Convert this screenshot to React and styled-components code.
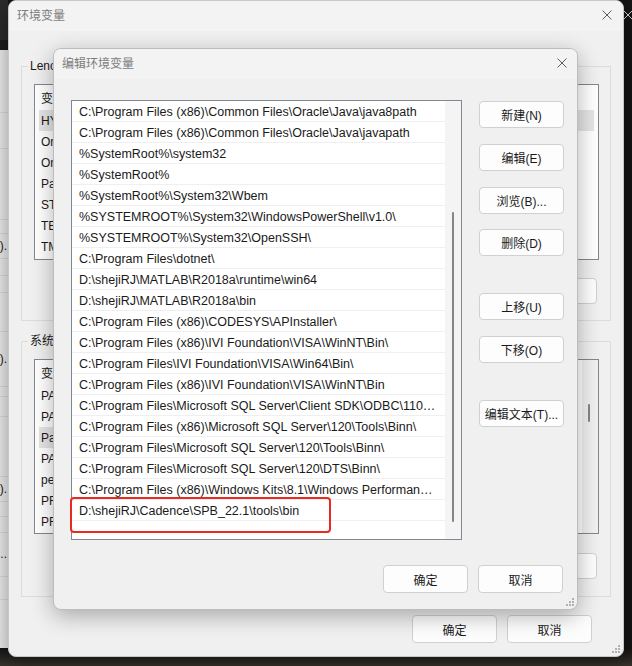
import React from "react";
import styled, { createGlobalStyle } from "styled-components";

// #region - styling -

const GlobalStyle = createGlobalStyle`
  html, body {
    margin: 0;
    padding: 0;
  }
  body {
    background: #161616;
    font-family: "Liberation Sans", "Noto Sans CJK SC", sans-serif;
    font-size: 12px;
    color: #1a1a1a;
  }
  * {
    box-sizing: border-box;
  }
`;

const Desktop = styled.div`
  position: relative;
  width: 632px;
  height: 666px;
  overflow: hidden;
  background: linear-gradient(#151515 0, #151515 648px, #3a332c 666px);
`;

/* window half hidden behind the left edge */
const BackWindow = styled.div`
  position: absolute;
  left: -192px;
  top: 0;
  width: 200px;
  height: 648px;
  background: #eeeeee;
  display: flex;
  flex-direction: column;
`;

const BackHeader = styled.div`
  height: 50px;
  flex: none;
  background: #2b2b2b;
  border-bottom: 10px solid #1b1b1b;
`;

const BackRow = styled.div`
  height: ${(p) => p.$h}px;
  flex: none;
  border-bottom: 1px solid #dcdcdc;
  text-align: right;
  padding-right: 1px;
  font-size: 12px;
  line-height: ${(p) => p.$h - 1}px;
  white-space: nowrap;
`;

const Window = styled.div`
  position: absolute;
  left: ${(p) => p.$x}px;
  top: ${(p) => p.$y}px;
  width: ${(p) => p.$w}px;
  height: ${(p) => p.$h}px;
  background: #f0f0f0;
  border: 1px solid ${(p) => (p.$front ? "#bdbdbd" : "#c8c8c8")};
  border-radius: 8px;
  box-shadow: 0 6px 22px rgba(0, 0, 0, ${(p) => (p.$front ? 0.3 : 0.4)});
  display: flex;
  flex-direction: column;
  overflow: hidden;
`;

const TitleBar = styled.div`
  height: 30px;
  flex: none;
  display: flex;
  align-items: center;
  justify-content: space-between;
  padding: 0 ${(p) => p.$closeGap}px 3px 8px;
  background: #f3f3f3;
  color: #7c7c7c;
  font-size: 12px;
`;

const Body = styled.div`
  flex: 1;
  display: flex;
  flex-direction: column;
  padding: ${(p) => p.$pad};
`;

const Group = styled.fieldset`
  margin: ${(p) => p.$mt}px 0 0 0;
  padding: 10px 11px ${(p) => p.$pb}px 12px;
  border: 1px solid #dcdcdc;
  min-width: 0;
`;

const Legend = styled.legend`
  margin-left: -6px;
  padding: 0 2px;
  font-size: 12px;
  line-height: 16px;
  color: #1a1a1a;
`;

const VarList = styled.div`
  height: ${(p) => p.$h}px;
  border: 1px solid #828790;
  background: #ffffff;
  display: flex;
  overflow: hidden;
`;

const VarColumn = styled.div`
  flex: 1;
  display: flex;
  flex-direction: column;
`;

const VarHeader = styled.div`
  height: 25px;
  flex: none;
  display: flex;
  align-items: center;
  padding-left: 6px;
`;

const VarRow = styled.div`
  height: 21px;
  flex: none;
  display: flex;
  align-items: center;
  margin: 0 4px;
  padding-left: 2px;
  background: ${(p) => (p.$selected ? "#e5e5e5" : "transparent")};
  white-space: nowrap;
`;

const NameCell = styled.span`
  width: 150px;
  flex: none;
  overflow: hidden;
`;

const ValueCell = styled.span`
  flex: 1;
  overflow: hidden;
`;

const SideTrack = styled.div`
  width: 16px;
  flex: none;
  background: #f0f0f0;
  padding: ${(p) => p.$top}px 0 0 6px;
`;

const Thumb = styled.div`
  width: 2px;
  height: ${(p) => p.$h}px;
  border-radius: 1px;
  background: #858585;
`;

const ButtonRow = styled.div`
  display: flex;
  justify-content: flex-end;
  gap: 10px;
  margin-top: ${(p) => p.$mt}px;
  padding-right: ${(p) => p.$pr || 0}px;
`;

const Button = styled.button`
  width: 85px;
  height: ${(p) => p.$h || 27}px;
  flex: none;
  margin-top: ${(p) => p.$mt || 0}px;
  padding: 0;
  background: #fdfdfd;
  border: 1px solid #d0d0d0;
  border-radius: 4px;
  font-family: inherit;
  font-size: 12px;
  color: #1a1a1a;
`;

const EditArea = styled.div`
  display: flex;
  gap: 17px;
`;

const PathList = styled.div`
  position: relative;
  width: 391px;
  height: 440px;
  flex: none;
  border: 1px solid #828790;
  background: #ffffff;
  display: flex;
`;

const PathRows = styled.div`
  flex: 1;
  display: flex;
  flex-direction: column;
  overflow: hidden;
`;

const PathRow = styled.div`
  height: 21px;
  flex: none;
  border-bottom: 1px solid #efefef;
  padding: 2px 8px 0 7px;
  line-height: 18px;
  font-size: 12.5px;
  white-space: nowrap;
  overflow: hidden;
  text-overflow: ellipsis;
`;

const PathTrack = styled.div`
  width: 16px;
  flex: none;
  background: #f4f4f4;
  padding: 111px 0 0 7px;
`;

const ButtonColumn = styled.div`
  display: flex;
  flex-direction: column;
  padding-top: 1px;
`;

const Highlight = styled.div`
  position: absolute;
  left: -2px;
  top: 396px;
  width: 261px;
  height: 36px;
  border: 2px solid #ea2a20;
  border-radius: 4px;
`;

const GripBox = styled.div`
  position: absolute;
  right: 3px;
  bottom: 3px;
  line-height: 0;
`;

const EdgeClose = styled.div`
  position: absolute;
  left: 623px;
  top: 10px;
  line-height: 0;
`;

// #endregion

const CloseIcon = ({ color = "#5c5c5c" }) => (
  <svg width="10" height="10" viewBox="0 0 10 10">
    <path d="M0.5 0.5L9.5 9.5M9.5 0.5L0.5 9.5" stroke={color} strokeWidth="1" />
  </svg>
);

const Grip = () => (
  <GripBox>
    <svg width="10" height="10" viewBox="0 0 10 10">
      {[
        [8, 0],
        [8, 3],
        [5, 3],
        [8, 6],
        [5, 6],
        [2, 6],
      ].map(([x, y]) => (
        <rect key={`${x}-${y}`} x={x} y={y + 2} width="2" height="2" fill="#b0b0b0" />
      ))}
    </svg>
  </GripBox>
);

const userVars = [
  ["HYDRA_HOME", "D:\\shejiRJ\\Hydra", true],
  ["OneDrive", "C:\\Users\\Lenovo\\OneDrive"],
  ["OneDriveConsumer", "C:\\Users\\Lenovo\\OneDrive"],
  ["Path", "C:\\Users\\Lenovo\\AppData\\Local\\Microsoft\\WindowsApps;"],
  ["STM32CubeMX_PATH", "D:\\shejiRJ\\STM32CubeMX"],
  ["TEMP", "C:\\Users\\Lenovo\\AppData\\Local\\Temp"],
  ["TMP", "C:\\Users\\Lenovo\\AppData\\Local\\Temp"],
];

const systemVars = [
  ["PADS_LIB", "D:\\shejiRJ\\PADS\\Lib"],
  ["PADS_ROOT", "D:\\shejiRJ\\PADS"],
  ["Path", "C:\\Program Files (x86)\\Common Files\\Oracle\\Java\\java8path;", true],
  ["PATHEXT", ".COM;.EXE;.BAT;.CMD;.VBS;.VBE;.JS;.JSE;.WSF;.WSH;.MSC"],
  ["perl", "D:\\shejiRJ\\Cadence\\SPB_22.1\\tools\\perl"],
  ["PROCESSOR_ARCHITECTURE", "AMD64"],
  ["PROCESSOR_IDENTIFIER", "Intel64 Family 6 Model 154 Stepping 3"],
];

const paths = [
  "C:\\Program Files (x86)\\Common Files\\Oracle\\Java\\java8path",
  "C:\\Program Files (x86)\\Common Files\\Oracle\\Java\\javapath",
  "%SystemRoot%\\system32",
  "%SystemRoot%",
  "%SystemRoot%\\System32\\Wbem",
  "%SYSTEMROOT%\\System32\\WindowsPowerShell\\v1.0\\",
  "%SYSTEMROOT%\\System32\\OpenSSH\\",
  "C:\\Program Files\\dotnet\\",
  "D:\\shejiRJ\\MATLAB\\R2018a\\runtime\\win64",
  "D:\\shejiRJ\\MATLAB\\R2018a\\bin",
  "C:\\Program Files (x86)\\CODESYS\\APInstaller\\",
  "C:\\Program Files (x86)\\IVI Foundation\\VISA\\WinNT\\Bin\\",
  "C:\\Program Files\\IVI Foundation\\VISA\\Win64\\Bin\\",
  "C:\\Program Files (x86)\\IVI Foundation\\VISA\\WinNT\\Bin",
  "C:\\Program Files\\Microsoft SQL Server\\Client SDK\\ODBC\\110\\Tools\\Binn\\",
  "C:\\Program Files (x86)\\Microsoft SQL Server\\120\\Tools\\Binn\\",
  "C:\\Program Files\\Microsoft SQL Server\\120\\Tools\\Binn\\",
  "C:\\Program Files\\Microsoft SQL Server\\120\\DTS\\Binn\\",
  "C:\\Program Files (x86)\\Windows Kits\\8.1\\Windows Performance Toolkit\\",
  "D:\\shejiRJ\\Cadence\\SPB_22.1\\tools\\bin",
  "",
];

const backRows = [
  [63, ""],
  [36, ""],
  [71, ""],
  [14, ""],
  [25, ")."],
  [17, ""],
  [17, ""],
  [39, ""],
  [55, ")."],
  [10, ""],
  [20, ""],
  [60, ""],
  [25, ")."],
  [15, ""],
  [16, ""],
  [44, "..."],
  [23, ""],
];

function VariableGroup({ title, rows, listH, mt, pb, btnMt, hasScroll, labels }) {
  return (
    <Group $mt={mt} $pb={pb}>
      <Legend>{title}</Legend>
      <VarList $h={listH}>
        <VarColumn>
          <VarHeader>
            <NameCell>变量</NameCell>
            <ValueCell>值</ValueCell>
          </VarHeader>
          {rows.map(([name, value, selected]) => (
            <VarRow key={name} $selected={selected}>
              <NameCell>{name}</NameCell>
              <ValueCell>{value}</ValueCell>
            </VarRow>
          ))}
        </VarColumn>
        {hasScroll && (
          <SideTrack $top={44}>
            <Thumb $h={18} />
          </SideTrack>
        )}
      </VarList>
      <ButtonRow $mt={btnMt} $pr={2}>
        {labels.map((l) => (
          <Button key={l} $h={26}>
            {l}
          </Button>
        ))}
      </ButtonRow>
    </Group>
  );
}

export default function App() {
  return (
    <>
      <GlobalStyle />
      <Desktop>
        <BackWindow>
          <BackHeader />
          {backRows.map(([h, t], i) => (
            <BackRow key={i} $h={h}>
              {t}
            </BackRow>
          ))}
        </BackWindow>

        <EdgeClose>
          <CloseIcon color="#d8d8d8" />
        </EdgeClose>

        {/* 环境变量 */}
        <Window $x={8} $y={0} $w={616} $h={657}>
          <TitleBar $closeGap={11}>
            <span>环境变量</span>
            <CloseIcon />
          </TitleBar>
          <Body $pad="27px 12px 0 12px">
            <VariableGroup
              title="Lenovo 的用户变量(U)"
              rows={userVars}
              listH={176}
              mt={0}
              pb={16}
              btnMt={18}
              labels={["新建(N)...", "编辑(E)...", "删除(D)"]}
            />
            <VariableGroup
              title="系统变量(S)"
              rows={systemVars}
              listH={175}
              mt={12}
              pb={17}
              btnMt={19}
              hasScroll
              labels={["新建(W)...", "编辑(I)...", "删除(L)"]}
            />
            <ButtonRow $mt={18} $pr={19}>
              <Button $h={28}>确定</Button>
              <Button $h={28}>取消</Button>
            </ButtonRow>
          </Body>
          <Grip />
        </Window>

        {/* 编辑环境变量 */}
        <Window $front $x={53} $y={48} $w={525} $h={562}>
          <TitleBar $closeGap={10}>
            <span>编辑环境变量</span>
            <CloseIcon />
          </TitleBar>
          <Body $pad="21px 14px 0 17px">
            <EditArea>
              <PathList>
                <PathRows>
                  {paths.map((p, i) => (
                    <PathRow key={i}>{p}</PathRow>
                  ))}
                </PathRows>
                <PathTrack>
                  <Thumb $h={310} />
                </PathTrack>
                <Highlight />
              </PathList>
              <ButtonColumn>
                <Button>新建(N)</Button>
                <Button $mt={16}>编辑(E)</Button>
                <Button $mt={16}>浏览(B)...</Button>
                <Button $mt={15}>删除(D)</Button>
                <Button $mt={37}>上移(U)</Button>
                <Button $mt={16}>下移(O)</Button>
                <Button $mt={37}>编辑文本(T)...</Button>
              </ButtonColumn>
            </EditArea>
            <ButtonRow $mt={25}>
              <Button $h={28}>确定</Button>
              <Button $h={28}>取消</Button>
            </ButtonRow>
          </Body>
          <Grip />
        </Window>
      </Desktop>
    </>
  );
}
